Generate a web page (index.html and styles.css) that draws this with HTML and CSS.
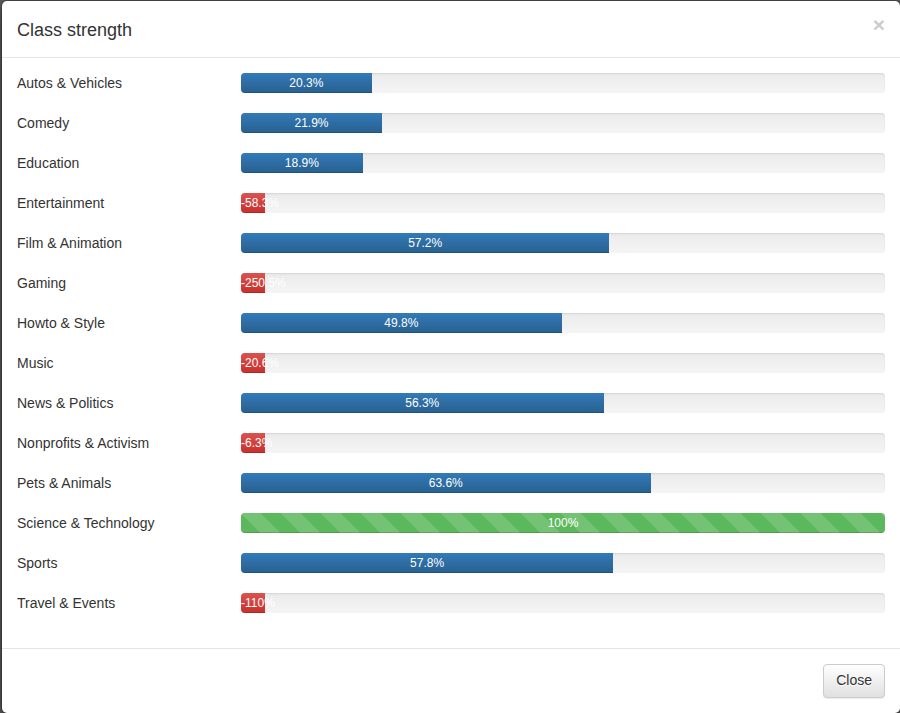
FILE: index.html
```html
<!DOCTYPE html>
<html>
<head>
<meta charset="utf-8">
<link rel="stylesheet" href="styles.css">
</head>
<body>
<div class="modal">
  <div class="modal-header">
    <button class="close" type="button">×</button>
    <h4 class="modal-title">Class strength</h4>
  </div>
  <div class="modal-body">
    <div class="row"><div class="label">Autos &amp; Vehicles</div><div class="progress"><div class="bar" style="width:20.3%">20.3%</div></div></div>
    <div class="row"><div class="label">Comedy</div><div class="progress"><div class="bar" style="width:21.9%">21.9%</div></div></div>
    <div class="row"><div class="label">Education</div><div class="progress"><div class="bar" style="width:18.9%">18.9%</div></div></div>
    <div class="row"><div class="label">Entertainment</div><div class="progress"><div class="bar bar-danger">-58.3%</div></div></div>
    <div class="row"><div class="label">Film &amp; Animation</div><div class="progress"><div class="bar" style="width:57.2%">57.2%</div></div></div>
    <div class="row"><div class="label">Gaming</div><div class="progress"><div class="bar bar-danger">-250.5%</div></div></div>
    <div class="row"><div class="label">Howto &amp; Style</div><div class="progress"><div class="bar" style="width:49.8%">49.8%</div></div></div>
    <div class="row"><div class="label">Music</div><div class="progress"><div class="bar bar-danger">-20.6%</div></div></div>
    <div class="row"><div class="label">News &amp; Politics</div><div class="progress"><div class="bar" style="width:56.3%">56.3%</div></div></div>
    <div class="row"><div class="label">Nonprofits &amp; Activism</div><div class="progress"><div class="bar bar-danger">-6.3%</div></div></div>
    <div class="row"><div class="label">Pets &amp; Animals</div><div class="progress"><div class="bar" style="width:63.6%">63.6%</div></div></div>
    <div class="row"><div class="label">Science &amp; Technology</div><div class="progress"><div class="bar bar-success" style="width:100%">100%</div></div></div>
    <div class="row"><div class="label">Sports</div><div class="progress"><div class="bar" style="width:57.8%">57.8%</div></div></div>
    <div class="row"><div class="label">Travel &amp; Events</div><div class="progress"><div class="bar bar-danger">-110%</div></div></div>
  </div>
  <div class="modal-footer">
    <button class="btn" type="button">Close</button>
  </div>
</div>
</body>
</html>
```
FILE: styles.css
```css
* { box-sizing: border-box; }
html, body { margin: 0; padding: 0; height: 100%; overflow: hidden; }
body {
  background: #5e5e5e;
  font-family: "Liberation Sans", Arial, Helvetica, sans-serif;
  font-size: 14px;
  line-height: 1.428571;
  color: #333;
}
.modal {
  margin: 0 0 0 1px;
  width: 900px;
  background: #fff;
  border: 1px solid rgba(0,0,0,.2);
  border-radius: 6px;
  background-clip: padding-box;
  box-shadow: 0 5px 15px rgba(0,0,0,.5);
}
.modal-header {
  padding: 17px 15px 13px;
  border-bottom: 1px solid #e5e5e5;
}
.modal-title {
  margin: 0;
  font-size: 18px;
  font-weight: 500;
  line-height: 1.428571;
}
.close {
  float: right;
  margin-top: -4px;
  padding: 0;
  background: transparent;
  border: 0;
  font-family: "Liberation Sans", Arial, sans-serif;
  font-size: 21px;
  font-weight: bold;
  line-height: 1;
  color: #000;
  text-shadow: 0 1px 0 #fff;
  opacity: .2;
  cursor: pointer;
}
.modal-body { padding: 15px; }
.row {
  display: grid;
  grid-template-columns: 224px 1fr;
  align-items: start;
}
.label { line-height: 21px; }
.progress {
  height: 20px;
  margin-bottom: 20px;
  overflow: hidden;
  border-radius: 4px;
  background-image: linear-gradient(to bottom, #ebebeb 0, #f5f5f5 100%);
  box-shadow: inset 0 1px 2px rgba(0,0,0,.1);
}
.bar {
  float: left;
  height: 100%;
  font-size: 12px;
  line-height: 20px;
  color: #fff;
  text-align: center;
  white-space: nowrap;
  background-image: linear-gradient(to bottom, #337ab7 0, #286090 100%);
  box-shadow: inset 0 -1px 0 rgba(0,0,0,.15);
}
.bar-danger {
  width: 24px;
  min-width: 24px;
  background-image: linear-gradient(to bottom, #d9534f 0, #c9302c 100%);
}
.bar-success {
  background-color: #5cb85c;
  background-image: linear-gradient(45deg, rgba(255,255,255,.15) 25%, transparent 25%, transparent 50%, rgba(255,255,255,.15) 50%, rgba(255,255,255,.15) 75%, transparent 75%, transparent);
  background-size: 40px 40px;
}
.modal-footer {
  padding: 15px;
  text-align: right;
  border-top: 1px solid #e5e5e5;
}
.btn {
  display: inline-block;
  padding: 6px 12px;
  font-family: "Liberation Sans", Arial, sans-serif;
  font-size: 14px;
  line-height: 1.428571;
  color: #333;
  border: 1px solid #ccc;
  border-radius: 4px;
  background-image: linear-gradient(to bottom, #fff 0, #e0e0e0 100%);
  text-shadow: 0 1px 0 #fff;
  box-shadow: inset 0 1px 0 rgba(255,255,255,.15), 0 1px 1px rgba(0,0,0,.075);
  cursor: pointer;
}
```
